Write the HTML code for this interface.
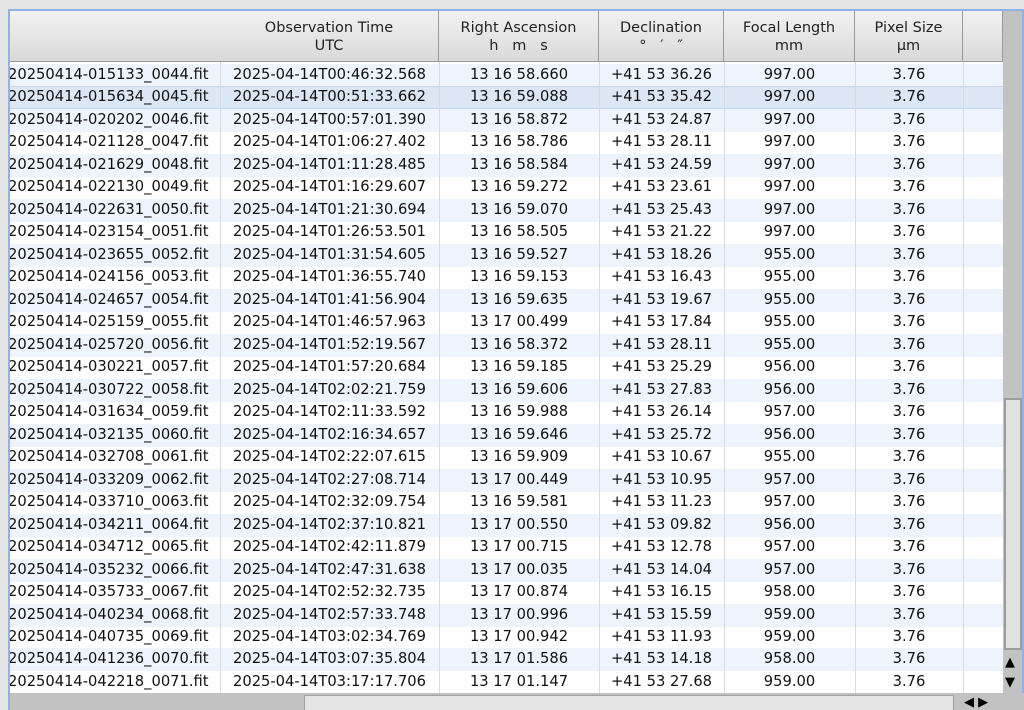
<!DOCTYPE html>
<html><head><meta charset="utf-8"><style>
body{margin:0;width:1024px;height:710px;overflow:hidden;background:#e4e4e4;font-family:"DejaVu Sans","Liberation Sans",sans-serif;font-size:14.7px;color:#111;position:relative}
#frame{position:absolute;left:8px;top:9px;width:1016px;height:701px;border-left:2px solid #8fb3e8;border-top:2px solid #8fb3e8;box-sizing:border-box;background:#fff;overflow:hidden}
.hd{position:absolute;top:0;height:51px;background:linear-gradient(#f2f2f2,#d9d9d9);border-right:1px solid #9a9a9a;border-bottom:1px solid #9a9a9a;box-sizing:border-box;text-align:center;font-size:14.5px;line-height:18px;padding-top:8px;color:#222}
.r{position:absolute;left:0;width:993px;height:23px;line-height:22px}
.r.a{background:#eef4fd}
.r.s{background:#dce7f6;border-top:1px solid #c8d7ee;border-bottom:1px solid #c8d7ee;box-sizing:border-box;line-height:20px}
.c{position:absolute;top:0;text-align:center;white-space:nowrap}
.vl{position:absolute;top:51px;bottom:0;width:1px;background:#dadada}
</style></head><body>
<div id="frame">
<div class="hd" style="left:0;width:212px"></div>
<div class="hd" style="left:210px;width:219px">Observation Time<br>UTC</div>
<div class="hd" style="left:429px;width:160px">Right Ascension<br>h&nbsp;&nbsp;&nbsp;m&nbsp;&nbsp;&nbsp;s</div>
<div class="hd" style="left:589px;width:125px">Declination<br>°&nbsp;&nbsp;&nbsp;′&nbsp;&nbsp;&nbsp;″</div>
<div class="hd" style="left:714px;width:131px">Focal Length<br>mm</div>
<div class="hd" style="left:845px;width:108px">Pixel Size<br>µm</div>
<div class="hd" style="left:953px;width:40px"></div>
<div id="rows"></div>
<div class="vl" style="left:210px"></div><div class="vl" style="left:429px"></div><div class="vl" style="left:589px"></div><div class="vl" style="left:714px"></div><div class="vl" style="left:845px"></div><div class="vl" style="left:953px"></div>
<div style="position:absolute;left:993px;top:0;width:21px;height:682px;background:#c2c2c2"></div>
<div style="position:absolute;left:994px;top:387px;width:18px;height:252px;background:#e2e2e2;border:2px solid #9c9c9c;box-sizing:border-box"></div>
<div style="position:absolute;left:995px;top:644px;font-size:13px;color:#000">▲</div>
<div style="position:absolute;left:995px;top:664px;font-size:13px;color:#000">▼</div>
<div style="position:absolute;left:0;top:682px;width:1014px;height:20px;background:#c2c2c2"></div>
<div style="position:absolute;left:294px;top:684px;width:650px;height:20px;background:#e4e4e4;border:1px solid #a0a0a0;box-sizing:border-box"></div>
<div style="position:absolute;left:954px;top:684px;font-size:13px;color:#000">◀&nbsp;▶</div>
<div style="position:absolute;right:0;top:0;width:2px;height:682px;background:#8fb3e8"></div>
</div>
<script>
var d=[["015133_0044","00:46:32.568","16 58.660","53 36.26","997"],["015634_0045","00:51:33.662","16 59.088","53 35.42","997"],["020202_0046","00:57:01.390","16 58.872","53 24.87","997"],["021128_0047","01:06:27.402","16 58.786","53 28.11","997"],["021629_0048","01:11:28.485","16 58.584","53 24.59","997"],["022130_0049","01:16:29.607","16 59.272","53 23.61","997"],["022631_0050","01:21:30.694","16 59.070","53 25.43","997"],["023154_0051","01:26:53.501","16 58.505","53 21.22","997"],["023655_0052","01:31:54.605","16 59.527","53 18.26","955"],["024156_0053","01:36:55.740","16 59.153","53 16.43","955"],["024657_0054","01:41:56.904","16 59.635","53 19.67","955"],["025159_0055","01:46:57.963","17 00.499","53 17.84","955"],["025720_0056","01:52:19.567","16 58.372","53 28.11","955"],["030221_0057","01:57:20.684","16 59.185","53 25.29","956"],["030722_0058","02:02:21.759","16 59.606","53 27.83","956"],["031634_0059","02:11:33.592","16 59.988","53 26.14","957"],["032135_0060","02:16:34.657","16 59.646","53 25.72","956"],["032708_0061","02:22:07.615","16 59.909","53 10.67","955"],["033209_0062","02:27:08.714","17 00.449","53 10.95","957"],["033710_0063","02:32:09.754","16 59.581","53 11.23","957"],["034211_0064","02:37:10.821","17 00.550","53 09.82","956"],["034712_0065","02:42:11.879","17 00.715","53 12.78","957"],["035232_0066","02:47:31.638","17 00.035","53 14.04","957"],["035733_0067","02:52:32.735","17 00.874","53 16.15","958"],["040234_0068","02:57:33.748","17 00.996","53 15.59","959"],["040735_0069","03:02:34.769","17 00.942","53 11.93","959"],["041236_0070","03:07:35.804","17 01.586","53 14.18","958"],["042218_0071","03:17:17.706","17 01.147","53 27.68","959"]];
var h="";d.forEach(function(r,i){var cls=i==1?"r s":(i%2==0?"r a":"r");var t=53+i*22.48;
h+='<div class="'+cls+'" style="top:'+t+'px"><div class="c" style="left:-2px;text-align:left">20250414-'+r[0]+'.fit</div><div class="c" style="left:210px;width:219px">2025-04-14T'+r[1]+'</div><div class="c" style="left:429px;width:160px">13 '+r[2]+'</div><div class="c" style="left:589px;width:125px">+41 '+r[3]+'</div><div class="c" style="left:714px;width:131px">'+r[4]+'.00</div><div class="c" style="left:845px;width:108px">3.76</div></div>';});
document.getElementById("rows").innerHTML=h;
</script>
</body></html>
